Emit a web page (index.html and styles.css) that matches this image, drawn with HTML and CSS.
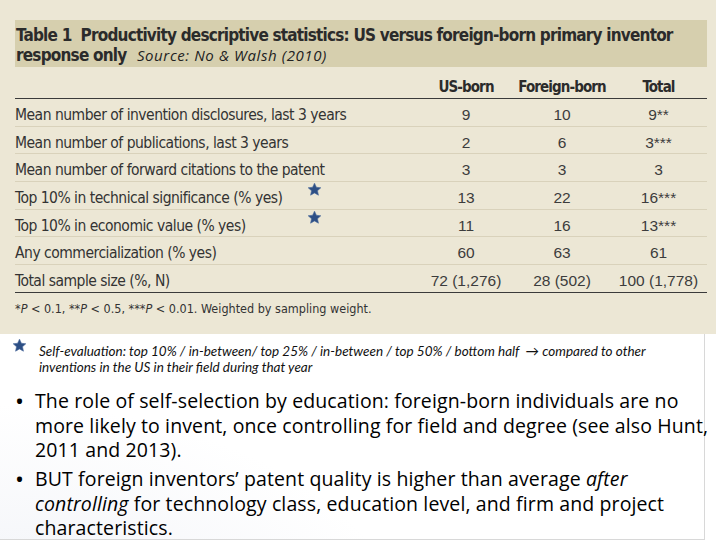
FILE: index.html
```html
<!DOCTYPE html>
<html>
<head>
<meta charset="utf-8">
<link rel="stylesheet" href="styles.css">
</head>
<body>
<div class="slide">
  <section class="fig">
    <div class="fig-title">
      <div class="t-line">Table 1&nbsp; Productivity descriptive statistics: US versus foreign-born primary inventor</div>
      <div class="t-line">response only <span class="source">Source: No &amp; Walsh (2010)</span></div>
    </div>
    <div class="tbl">
      <div class="row head">
        <div class="lab"></div><div class="num">US-born</div><div class="num">Foreign-born</div><div class="num">Total</div>
      </div>
      <div class="row"><div class="lab">Mean number of invention disclosures, last 3 years</div><div class="num">9</div><div class="num">10</div><div class="num">9**</div></div>
      <div class="row"><div class="lab">Mean number of publications, last 3 years</div><div class="num">2</div><div class="num">6</div><div class="num">3***</div></div>
      <div class="row"><div class="lab">Mean number of forward citations to the patent</div><div class="num">3</div><div class="num">3</div><div class="num">3</div></div>
      <div class="row"><div class="lab">Top 10% in technical significance (% yes)<svg class="star mark" viewBox="0 0 24 24"><path d="M12 1.8l3 6.6 7.1.8-5.3 4.8 1.5 7.1L12 17.5l-6.3 3.6 1.5-7.1L1.9 9.2l7.1-.8z"/></svg></div><div class="num">13</div><div class="num">22</div><div class="num">16***</div></div>
      <div class="row"><div class="lab">Top 10% in economic value (% yes)<svg class="star mark" viewBox="0 0 24 24"><path d="M12 1.8l3 6.6 7.1.8-5.3 4.8 1.5 7.1L12 17.5l-6.3 3.6 1.5-7.1L1.9 9.2l7.1-.8z"/></svg></div><div class="num">11</div><div class="num">16</div><div class="num">13***</div></div>
      <div class="row"><div class="lab">Any commercialization (% yes)</div><div class="num">60</div><div class="num">63</div><div class="num">61</div></div>
      <div class="row last"><div class="lab">Total sample size (%, N)</div><div class="num">72 (1,276)</div><div class="num">28 (502)</div><div class="num">100 (1,778)</div></div>
    </div>
    <p class="fn">*<i>P</i> &lt; 0.1, **<i>P</i> &lt; 0.5, ***<i>P</i> &lt; 0.01. Weighted by sampling weight.</p>
  </section>
  <section class="notes">
    <div class="note">
      <svg class="star" viewBox="0 0 24 24"><path d="M12 1.8l3 6.6 7.1.8-5.3 4.8 1.5 7.1L12 17.5l-6.3 3.6 1.5-7.1L1.9 9.2l7.1-.8z"/></svg>
      <p>Self-evaluation: top 10% / in-between/ top 25% / in-between / top 50% / bottom half &nbsp;→ compared to other inventions in the US in their field during that year</p>
    </div>
    <ul class="bullets">
      <li>The role of self-selection by education: foreign-born individuals are no more likely to invent, once controlling for field and degree (see also Hunt, 2011 and 2013).</li>
      <li>BUT foreign inventors’ patent quality is higher than average <i>after controlling</i> for technology class, education level, and firm and project characteristics.</li>
    </ul>
  </section>
</div>
</body>
</html>
```
FILE: styles.css
```css
html, body {
  margin: 0;
  padding: 0;
  background: #ffffff;
}
.slide {
  width: 720px;
  height: 540px;
  overflow: hidden;
}
.fig {
  width: 716px;
  height: 334px;
  box-sizing: border-box;
  background: #ece7d5;
  padding: 20px 9px 0 15px;
  font-family: "DejaVu Sans", "Liberation Sans", sans-serif;
  font-stretch: condensed;
  color: #2e2e2e;
}
.fig-title {
  background: #d6cfae;
  height: 47px;
  box-sizing: border-box;
  padding: 5px 0 0 1px;
  font-weight: bold;
  font-size: 17px;
  line-height: 20px;
  color: #2b2b2b;
  letter-spacing: -0.8px;
}
.t-line { white-space: nowrap; }
.source {
  font-family: "Open Sans", "Liberation Sans", sans-serif;
  font-stretch: normal;
  font-weight: normal;
  font-style: italic;
  font-size: 15px;
  letter-spacing: 0.6px;
  margin-left: 6px;
  color: #222;
}
.tbl {
  margin-top: 8px;
}
.row {
  display: grid;
  grid-template-columns: 403px 96px 96px 97px;
  align-items: center;
  height: 27.7px;
  box-sizing: border-box;
  padding-top: 5px;
  border-bottom: 1px solid #d9d2bb;
  font-size: 15.5px;
  letter-spacing: -0.5px;
}
.row.head {
  height: 24px;
  padding-top: 0;
  border-bottom: 1.5px solid #3a3a3a;
  font-weight: bold;
  font-size: 15px;
  letter-spacing: -0.9px;
  color: #2b2b2b;
}
.row.last {
  border-bottom: 1.5px solid #3a3a3a;
}
.lab {
  position: relative;
  white-space: nowrap;
  color: #333;
}
.num {
  text-align: center;
  white-space: nowrap;
  font-family: "Liberation Sans", sans-serif;
  letter-spacing: 0;
  color: #3c3c3c;
}
.head .num {
  font-family: "DejaVu Sans", "Liberation Sans", sans-serif;
  letter-spacing: -0.9px;
  color: #2b2b2b;
}
.star {
  width: 15px;
  height: 15px;
  fill: #2d4f85;
  stroke: #4a6a9c;
  stroke-width: 1;
  stroke-linejoin: round;
}
.mark {
  position: absolute;
  left: 292px;
  top: -6.5px;
}
.fn {
  margin: 8px 0 0;
  font-size: 12.5px;
  color: #333;
}
.notes {
  height: 206px;
  box-sizing: border-box;
  width: 705px;
  border-right: 1px solid #d8d8d8;
  border-bottom: 1px solid #d8d8d8;
  background: radial-gradient(ellipse 420px 260px at 0px 330px, #eef0f6 0%, #ffffff 100%);
  padding: 3px 0 0 12px;
  font-family: "Lato", "Liberation Sans", sans-serif;
}
.note {
  display: flex;
  gap: 12px;
  align-items: flex-start;
}
.note .star {
  flex: none;
  margin-top: 1px;
}
.note p {
  margin: 6px 0 0;
  font-style: italic;
  font-size: 13.5px;
  line-height: 16px;
  color: #111;
  width: 620px;
}
.bullets {
  list-style: none;
  margin: 14px 0 0;
  padding: 0 0 0 23px;
  font-family: "Open Sans", "Liberation Sans", sans-serif;
  font-size: 19.5px;
  letter-spacing: 0.12px;
  line-height: 24.5px;
  color: #000;
}
.bullets li {
  position: relative;
  margin-bottom: 4.5px;
  width: 678px;
}
.bullets li::before {
  content: "•";
  position: absolute;
  left: -20px;
  font-size: 24px;
}
```
